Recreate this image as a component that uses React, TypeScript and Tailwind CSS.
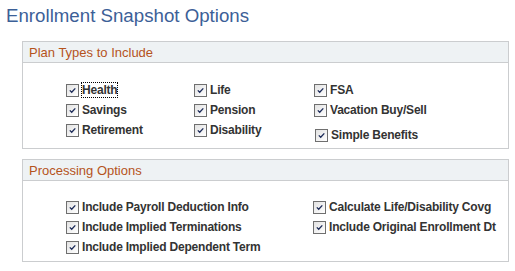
import React from 'react';

interface Opt {
  label: string;
  focus?: boolean;
}

function CheckBox() {
  return (
    <span className="flex h-[13px] w-[13px] shrink-0 items-center justify-center border border-[#6f6f6f] bg-gradient-to-br from-[#e2e2e2] to-white">
      <svg width="9" height="9" viewBox="0 0 9 9" fill="none">
        <path d="M1.8 4.4 L3.7 6.3 L7.3 2.4" stroke="#1b2a58" strokeWidth="1.3" />
      </svg>
    </span>
  );
}

function Option({ label, focus }: Opt) {
  return (
    <div className="flex h-[20px] items-center gap-[3px]">
      <CheckBox />
      <span
        className={`text-[12px] font-bold leading-[14px] tracking-[-0.2px] text-[#333333] ${
          focus ? 'outline outline-1 outline-dotted outline-black' : ''
        }`}
      >
        {label}
      </span>
    </div>
  );
}

function Panel({ title, children }: { title: string; children: React.ReactNode }) {
  return (
    <div className="w-[487px] border border-[#cbcdcf]">
      <div className="flex h-[21px] items-center border-b border-[#cbcdcf] bg-[#eef2f4] pl-[6px] text-[13px] leading-none text-[#b5531c]">
        {title}
      </div>
      {children}
    </div>
  );
}

export default function App() {
  return (
    <div className="h-[271px] w-[515px] bg-white font-['Liberation_Sans',Arial,sans-serif]">
      <h1 className="pl-[6px] pt-[4px] text-[18.7px] leading-[24px] text-[#3c6097]">
        Enrollment Snapshot Options
      </h1>

      <div className="ml-[22px] mt-[13px]">
        <Panel title="Plan Types to Include">
          <div className="flex pl-[43px] pt-[17px] pb-[3px]">
            <div className="w-[128px]">
              <Option label="Health" focus />
              <Option label="Savings" />
              <Option label="Retirement" />
            </div>
            <div className="w-[120px]">
              <Option label="Life" />
              <Option label="Pension" />
              <Option label="Disability" />
            </div>
            <div>
              <Option label="FSA" />
              <Option label="Vacation Buy/Sell" />
              <div className="mt-[5px] pl-[1px]">
                <Option label="Simple Benefits" />
              </div>
            </div>
          </div>
        </Panel>

        <div className="mt-[10px]">
          <Panel title="Processing Options">
            <div className="flex pl-[43px] pt-[16px] pb-[4px]">
              <div className="w-[247px]">
                <Option label="Include Payroll Deduction Info" />
                <Option label="Include Implied Terminations" />
                <Option label="Include Implied Dependent Term" />
              </div>
              <div>
                <Option label="Calculate Life/Disability Covg" />
                <Option label="Include Original Enrollment Dt" />
              </div>
            </div>
          </Panel>
        </div>
      </div>
    </div>
  );
}
